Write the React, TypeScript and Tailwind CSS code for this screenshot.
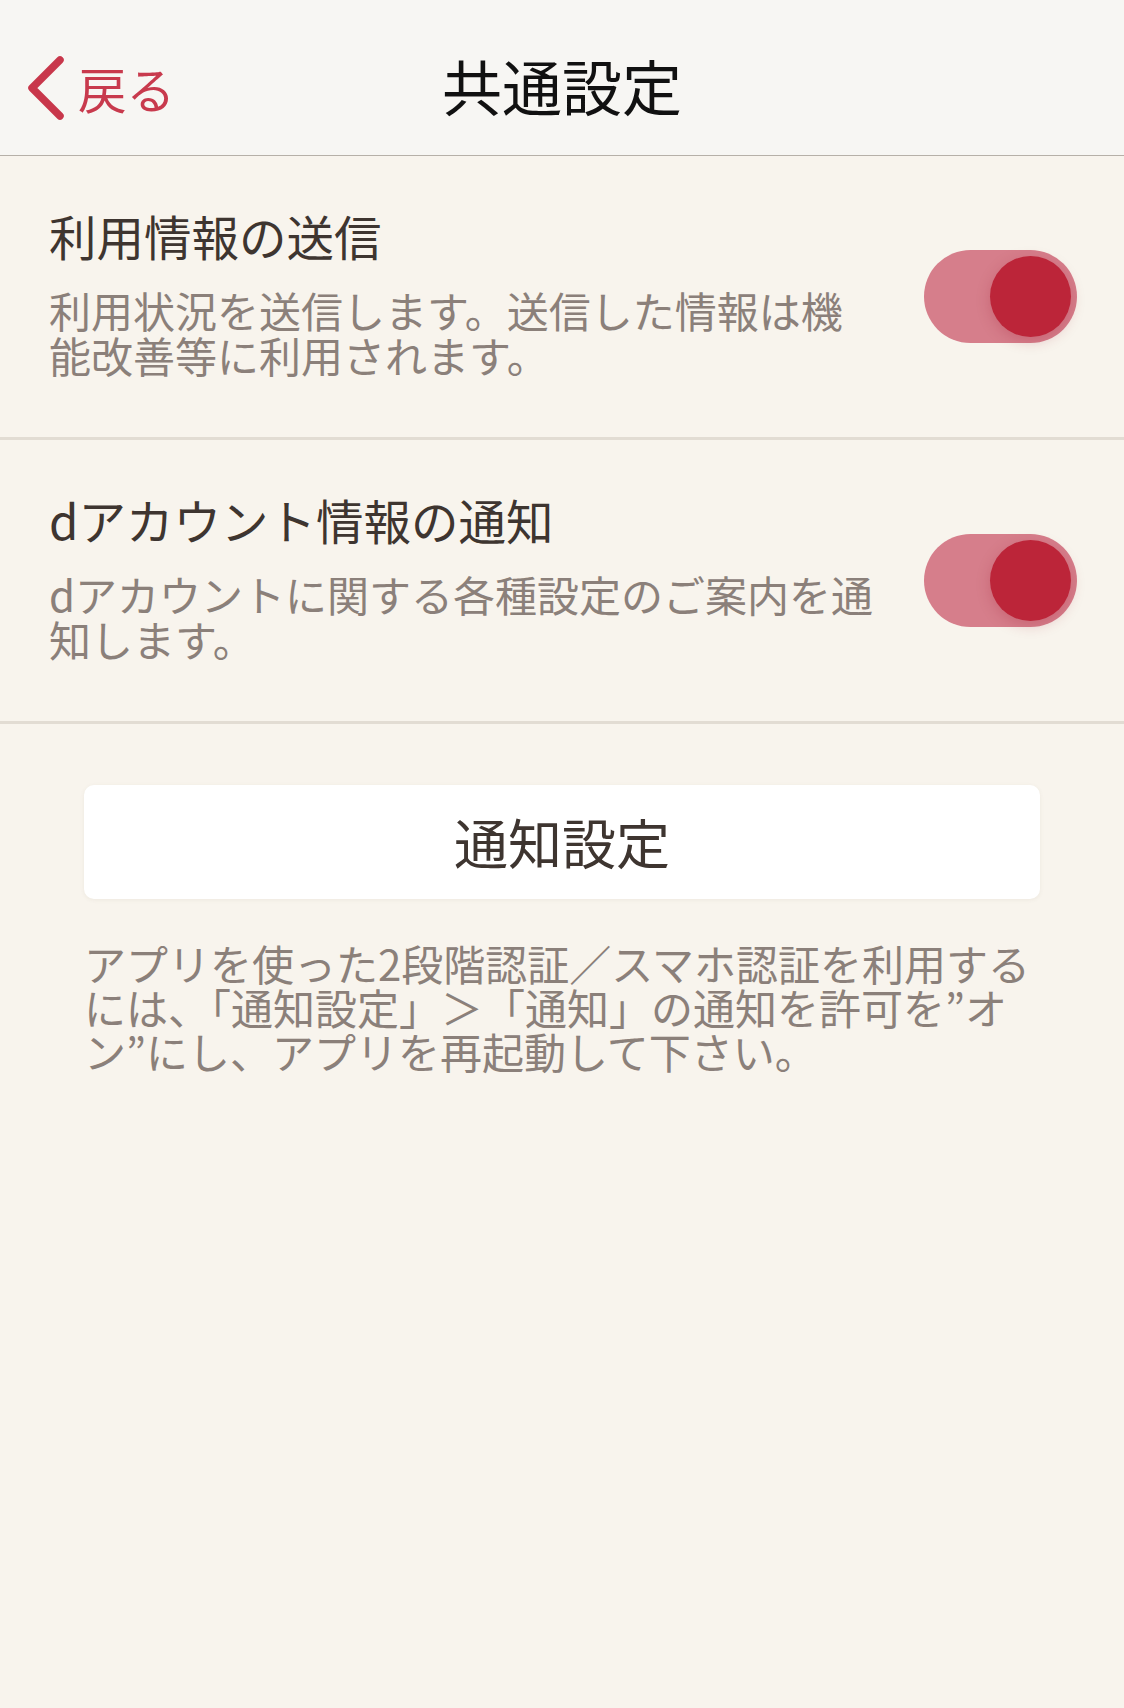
import React from "react";

const font = { fontFamily: '"Noto Sans CJK JP", "Noto Sans", sans-serif' };

function Toggle() {
  return (
    <div className="relative w-[153px] h-[93px] rounded-full bg-[#d67e8b] flex items-center justify-end pr-[6px] shrink-0">
      <div className="w-[81px] h-[81px] rounded-full bg-[#bc2539] shadow-[0_4px_14px_rgba(160,30,50,0.25)]" />
    </div>
  );
}

function Row({ title, lines }: { title: string; lines: string[] }) {
  return (
    <div className="h-[284px] flex items-center justify-between pl-[49px] pr-[47px] border-b-[3px] border-[#e2dcd3]">
      <div className="flex flex-col pb-[8px]">
        <div className="text-[47.5px] leading-[54px] text-[#3e3530]">{title}</div>
        <div className="mt-[24px] text-[42px] leading-[45px] text-[#8b807a]">
          {lines.map((l, i) => (
            <div key={i} className="whitespace-nowrap">{l}</div>
          ))}
        </div>
      </div>
      <Toggle />
    </div>
  );
}

export default function App() {
  return (
    <div style={font} className="w-[1124px] h-[1708px] bg-[#f8f4ed] flex flex-col">
      <header className="h-[156px] shrink-0 bg-[#f7f6f3] border-b-[1.5px] border-[#b6b0a8] flex items-center relative">
        <div className="flex items-center pl-[27px] pt-[22px]">
          <svg width="40" height="66" viewBox="0 0 40 66" className="shrink-0">
            <path d="M33 4 L5 32 L33 60" fill="none" stroke="#c8374b" strokeWidth="7.5" strokeLinecap="round" strokeLinejoin="round" />
          </svg>
          <span className="ml-[11px] text-[48.5px] leading-none text-[#c83a4d]">戻る</span>
        </div>
        <div className="absolute left-0 right-0 top-0 h-[156px] pt-[14px] flex items-center justify-center pointer-events-none">
          <span className="text-[60px] leading-none text-[#111111]">共通設定</span>
        </div>
      </header>

      <Row
        title="利用情報の送信"
        lines={["利用状況を送信します。送信した情報は機", "能改善等に利用されます。"]}
      />
      <Row
        title="dアカウント情報の通知"
        lines={["dアカウントに関する各種設定のご案内を通", "知します。"]}
      />

      <div className="px-[84px] pt-[61px]">
        <div className="h-[114px] rounded-[10px] bg-white shadow-[0_1px_4px_rgba(120,100,80,0.08)] flex items-center justify-center">
          <span className="text-[54px] leading-none text-[#3e3530]">通知設定</span>
        </div>
      </div>

      <div className="px-[84px] mt-[42px] text-[42px] leading-[44px] text-[#8b807a]">
        <div className="whitespace-nowrap">アプリを使った2段階認証／スマホ認証を利用する</div>
        <div className="whitespace-nowrap">には、「通知設定」＞「通知」の通知を許可を”オ</div>
        <div className="whitespace-nowrap">ン”にし、アプリを再起動して下さい。</div>
      </div>
    </div>
  );
}
